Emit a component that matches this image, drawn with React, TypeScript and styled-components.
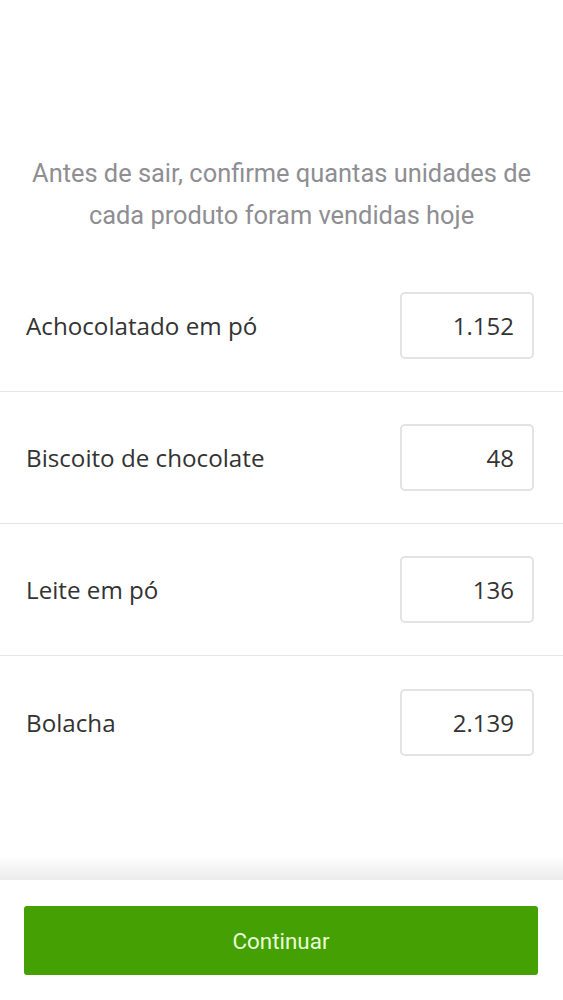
import React from "react";
import styled, { createGlobalStyle } from "styled-components";

const Global = createGlobalStyle`
  html, body { margin: 0; padding: 0; background: #ffffff; }
  * { box-sizing: border-box; }
`;

const Page = styled.div`
  min-height: 100vh;
  display: flex;
  flex-direction: column;
  background: #ffffff;
`;

const Content = styled.main`
  flex: 1;
  display: flex;
  flex-direction: column;
`;

const Intro = styled.p`
  margin: 0;
  padding: 152px 10px 0;
  text-align: center;
  font-family: Roboto, "Liberation Sans", sans-serif;
  font-size: 25.4px;
  line-height: 42px;
  color: #8e8e93;
`;

const List = styled.ul`
  list-style: none;
  margin: 24px 0 0;
  padding: 0;
`;

const Row = styled.li<{ $last?: boolean }>`
  height: 132px;
  display: flex;
  align-items: center;
  justify-content: space-between;
  padding: 0 29px 0 26px;
  border-bottom: ${(p) => (p.$last ? "none" : "1px solid #e6e6e6")};
`;

const Label = styled.span`
  font-family: "Open Sans", "Noto Sans", sans-serif;
  font-size: 24.2px;
  color: #333333;
`;

const Qty = styled.input`
  width: 134px;
  height: 67px;
  border: 2px solid #e3e3e3;
  border-radius: 5px;
  padding: 0 18px;
  text-align: right;
  font-family: "Open Sans", "Noto Sans", sans-serif;
  font-size: 24px;
  color: #333333;
  background: #ffffff;
  outline: none;
`;

const Footer = styled.footer`
  position: relative;
  height: 120px;
  padding: 26px 25px 25px 24px;
  background: #ffffff;
  &::before {
    content: "";
    position: absolute;
    left: 0;
    right: 0;
    top: -24px;
    height: 24px;
    background: linear-gradient(to bottom, rgba(0, 0, 0, 0), rgba(0, 0, 0, 0.08));
  }
`;

const Button = styled.button`
  width: 100%;
  height: 69px;
  border: none;
  border-radius: 3px;
  background: #45a003;
  color: #e6ffd6;
  font-family: Roboto, "Liberation Sans", sans-serif;
  font-size: 22.4px;
  cursor: pointer;
`;

const products = [
  { name: "Achocolatado em pó", qty: "1.152" },
  { name: "Biscoito de chocolate", qty: "48" },
  { name: "Leite em pó", qty: "136" },
  { name: "Bolacha", qty: "2.139" },
];

export default function App() {
  return (
    <Page>
      <Global />
      <Content>
        <Intro>
          Antes de sair, confirme quantas unidades de
          <br />
          cada produto foram vendidas hoje
        </Intro>
        <List>
          {products.map((p, i) => (
            <Row key={p.name} $last={i === products.length - 1}>
              <Label>{p.name}</Label>
              <Qty defaultValue={p.qty} inputMode="numeric" />
            </Row>
          ))}
        </List>
      </Content>
      <Footer>
        <Button>Continuar</Button>
      </Footer>
    </Page>
  );
}
